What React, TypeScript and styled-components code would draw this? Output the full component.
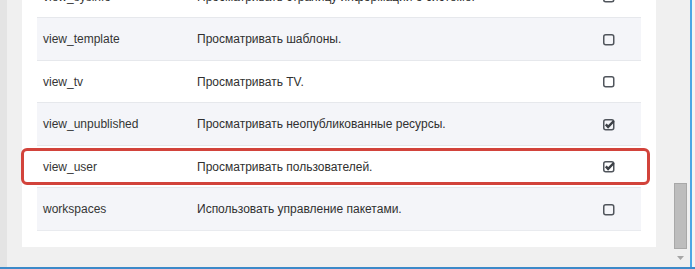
import { useLayoutEffect, useRef } from "react"
import styled, { createGlobalStyle } from "styled-components"

const GlobalStyle = createGlobalStyle`
  html, body {
    margin: 0;
    padding: 0;
    background: #f0f0f0;
    overflow: hidden;
  }
  body {
    font-family: "Liberation Sans", Arial, sans-serif;
  }
`

const Frame = styled.div`
  width: 695px;
  height: 269px;
  display: flex;
  flex-direction: column;
  background: #f0f0f0;
`
const Body = styled.div`
  flex: 1;
  display: flex;
  min-height: 0;
`
const LeftEdge = styled.div`
  width: 7px;
  background: #e4e4e4;
`
const Viewport = styled.div`
  flex: 1;
  overflow: hidden;
  padding: 0 16px 0 15px;
`
const Panel = styled.div`
  background: #fff;
  padding: 15px 15px 16px 15px;
  margin-bottom: 20px;
`
const Table = styled.div`
  border-bottom: 1px solid #e9ebef;
`
const Row = styled.div<{ $alt: boolean }>`
  position: relative;
  display: grid;
  grid-template-columns: 154px 1fr 44px;
  align-items: center;
  height: 42.5px;
  box-sizing: border-box;
  padding: 1px 0 0 6px;
  border-top: 1px solid #e6e8ec;
  background: ${(p) => (p.$alt ? "#f4f5f9" : "#fff")};
  font-size: 12px;
  color: #333;
`
const Name = styled.span`
  color: #353535;
`
const Description = styled.span`
  color: #303030;
`
const CheckCell = styled.span`
  display: flex;
  justify-content: flex-start;
  padding-left: 5px;
`
const Highlight = styled.div`
  position: absolute;
  left: -16px;
  right: -9px;
  top: 2px;
  bottom: 2px;
  border: 3px solid #d2433b;
  border-radius: 6px;
  pointer-events: none;
`
const ScrollTrack = styled.div`
  width: 18px;
  display: flex;
  flex-direction: column;
  justify-content: flex-end;
  align-items: flex-start;
  background: #f0f0f0;
`
const Thumb = styled.div`
  width: 13px;
  height: 66px;
  margin-left: 2px;
  box-sizing: border-box;
  background: #bdbdbd;
  border: 1px solid #a8a8a8;
`
const ArrowButton = styled.div`
  height: 18px;
  width: 17px;
  display: flex;
  align-items: center;
  justify-content: center;
  color: #a0a0a0;
`
const RightEdge = styled.div`
  width: 2px;
  background: #4aa6e4;
`
const RightMargin = styled.div`
  width: 3px;
  background: #f3f3f3;
`
const BottomEdge = styled.div`
  height: 2px;
  background: #3d8ac9;
`

type Perm = { name: string; text: string; on: boolean; marked?: boolean }

const perms: Perm[] = [
  { name: "view_propertyset", text: "Просматривать наборы параметров.", on: true },
  { name: "view_role", text: "Просматривать роли.", on: true },
  { name: "view_snippet", text: "Просматривать сниппеты.", on: true },
  { name: "view_sysinfo", text: "Просматривать страницу информации о системе.", on: false },
  { name: "view_template", text: "Просматривать шаблоны.", on: false },
  { name: "view_tv", text: "Просматривать TV.", on: false },
  { name: "view_unpublished", text: "Просматривать неопубликованные ресурсы.", on: true },
  { name: "view_user", text: "Просматривать пользователей.", on: true, marked: true },
  { name: "workspaces", text: "Использовать управление пакетами.", on: false },
]

const CheckBox = ({ on }: { on: boolean }) => (
  <svg width="14" height="13" viewBox="0 0 14 13">
    <rect x="1.75" y="1.75" width="10" height="10" rx="2" fill="none" stroke="#50555c" strokeWidth="1.5" />
    {on && <path d="M3.8 6.4 L6.1 8.9 L11.8 3" fill="none" stroke="#3c4046" strokeWidth="2.4" />}
  </svg>
)

const App = () => {
  const ref = useRef<HTMLDivElement>(null)

  // keep the list scrolled to its end, like the screenshot
  useLayoutEffect(() => {
    const el = ref.current
    if (el) el.scrollTop = el.scrollHeight - el.clientHeight
  }, [])

  return (
    <>
      <GlobalStyle />
      <Frame>
        <Body>
          <LeftEdge />
          <Viewport ref={ref}>
            <Panel>
              <Table>
                {perms.map((p, i) => (
                  <Row key={p.name} $alt={i % 2 === 0}>
                    <Name>{p.name}</Name>
                    <Description>{p.text}</Description>
                    <CheckCell>
                      <CheckBox on={p.on} />
                    </CheckCell>
                    {p.marked && <Highlight />}
                  </Row>
                ))}
              </Table>
            </Panel>
          </Viewport>
          <ScrollTrack>
            <Thumb />
            <ArrowButton>
              <svg width="7" height="4" viewBox="0 0 7 4">
                <path d="M0 0 L7 0 L3.5 4 Z" fill="#a6a6a6" />
              </svg>
            </ArrowButton>
          </ScrollTrack>
          <RightEdge />
          <RightMargin />
        </Body>
        <BottomEdge />
      </Frame>
    </>
  )
}

export default App
